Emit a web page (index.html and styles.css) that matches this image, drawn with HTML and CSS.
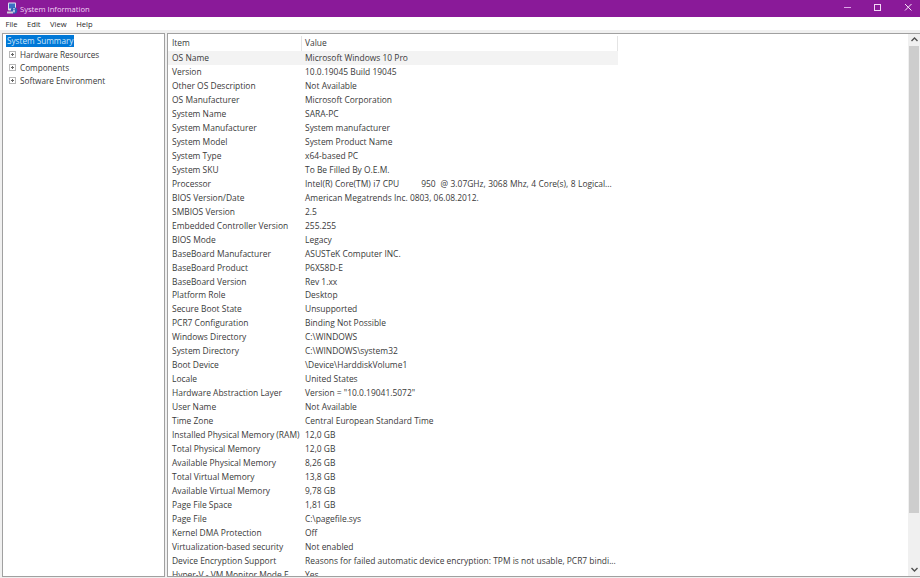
FILE: index.html
```html
<!DOCTYPE html>
<html lang="en">
<head>
<meta charset="utf-8">
<title>System Information</title>
<link rel="stylesheet" href="styles.css">
</head>
<body>
<div class="window">
  <header class="titlebar">
    <svg class="app-icon" width="13" height="13" viewBox="0 0 13 13"><rect x="3" y="0.5" width="8" height="8" rx="1" fill="#dfe6f2"/><rect x="4" y="1.5" width="6" height="5" fill="#3a6fc4"/><circle cx="9" cy="8.5" r="3.2" fill="#2f5fb5"/><rect x="8.4" y="7.6" width="1.2" height="2.8" fill="#fff"/><rect x="8.4" y="6.1" width="1.2" height="1" fill="#fff"/><rect x="2" y="9.5" width="6" height="2" fill="#c9ced8"/></svg>
    <span class="title">System Information</span>
    <div class="caption">
      <svg class="cap" width="30" height="17" viewBox="0 0 30 17"><path d="M14 7.5h7" stroke="#dca6e6" stroke-width="1"/></svg>
      <svg class="cap" width="30" height="17" viewBox="0 0 30 17"><rect x="14.5" y="4.5" width="6" height="6" fill="none" stroke="#f3d9f6" stroke-width="1"/></svg>
      <svg class="cap" width="30" height="17" viewBox="0 0 30 17"><path d="M15 4l6.5 6.5M21.5 4L15 10.5" stroke="#f7e6f9" stroke-width="1"/></svg>
    </div>
  </header>
  <nav class="menubar"><span>File</span><span>Edit</span><span>View</span><span>Help</span></nav>
  <main class="panes">
    <aside class="tree">
      <div class="tree-root"><span class="selected">System Summary</span></div>
      <div class="tree-item"><span class="expander"></span>Hardware Resources</div>
      <div class="tree-item"><span class="expander"></span>Components</div>
      <div class="tree-item"><span class="expander"></span>Software Environment</div>
    </aside>
    <section class="list">
      <div class="list-body">
        <div class="row head"><div class="c1">Item</div><div class="c2">Value</div></div>
        <div class="row hot"><div class="c1">OS Name</div><div class="c2">Microsoft Windows 10 Pro</div></div>
        <div class="row"><div class="c1">Version</div><div class="c2">10.0.19045 Build 19045</div></div>
        <div class="row"><div class="c1">Other OS Description</div><div class="c2">Not Available</div></div>
        <div class="row"><div class="c1">OS Manufacturer</div><div class="c2">Microsoft Corporation</div></div>
        <div class="row"><div class="c1">System Name</div><div class="c2">SARA-PC</div></div>
        <div class="row"><div class="c1">System Manufacturer</div><div class="c2">System manufacturer</div></div>
        <div class="row"><div class="c1">System Model</div><div class="c2">System Product Name</div></div>
        <div class="row"><div class="c1">System Type</div><div class="c2">x64-based PC</div></div>
        <div class="row"><div class="c1">System SKU</div><div class="c2">To Be Filled By O.E.M.</div></div>
        <div class="row"><div class="c1">Processor</div><div class="c2 wide-spaces">Intel(R) Core(TM) i7 CPU         950  @ 3.07GHz, 3068 Mhz, 4 Core(s), 8 Logical...</div></div>
        <div class="row"><div class="c1">BIOS Version/Date</div><div class="c2">American Megatrends Inc. 0803, 06.08.2012.</div></div>
        <div class="row"><div class="c1">SMBIOS Version</div><div class="c2">2.5</div></div>
        <div class="row"><div class="c1">Embedded Controller Version</div><div class="c2">255.255</div></div>
        <div class="row"><div class="c1">BIOS Mode</div><div class="c2">Legacy</div></div>
        <div class="row"><div class="c1">BaseBoard Manufacturer</div><div class="c2">ASUSTeK Computer INC.</div></div>
        <div class="row"><div class="c1">BaseBoard Product</div><div class="c2">P6X58D-E</div></div>
        <div class="row"><div class="c1">BaseBoard Version</div><div class="c2">Rev 1.xx</div></div>
        <div class="row"><div class="c1">Platform Role</div><div class="c2">Desktop</div></div>
        <div class="row"><div class="c1">Secure Boot State</div><div class="c2">Unsupported</div></div>
        <div class="row"><div class="c1">PCR7 Configuration</div><div class="c2">Binding Not Possible</div></div>
        <div class="row"><div class="c1">Windows Directory</div><div class="c2">C:\WINDOWS</div></div>
        <div class="row"><div class="c1">System Directory</div><div class="c2">C:\WINDOWS\system32</div></div>
        <div class="row"><div class="c1">Boot Device</div><div class="c2">\Device\HarddiskVolume1</div></div>
        <div class="row"><div class="c1">Locale</div><div class="c2">United States</div></div>
        <div class="row"><div class="c1">Hardware Abstraction Layer</div><div class="c2">Version = "10.0.19041.5072"</div></div>
        <div class="row"><div class="c1">User Name</div><div class="c2">Not Available</div></div>
        <div class="row"><div class="c1">Time Zone</div><div class="c2">Central European Standard Time</div></div>
        <div class="row"><div class="c1">Installed Physical Memory (RAM)</div><div class="c2">12,0 GB</div></div>
        <div class="row"><div class="c1">Total Physical Memory</div><div class="c2">12,0 GB</div></div>
        <div class="row"><div class="c1">Available Physical Memory</div><div class="c2">8,26 GB</div></div>
        <div class="row"><div class="c1">Total Virtual Memory</div><div class="c2">13,8 GB</div></div>
        <div class="row"><div class="c1">Available Virtual Memory</div><div class="c2">9,78 GB</div></div>
        <div class="row"><div class="c1">Page File Space</div><div class="c2">1,81 GB</div></div>
        <div class="row"><div class="c1">Page File</div><div class="c2">C:\pagefile.sys</div></div>
        <div class="row"><div class="c1">Kernel DMA Protection</div><div class="c2">Off</div></div>
        <div class="row"><div class="c1">Virtualization-based security</div><div class="c2">Not enabled</div></div>
        <div class="row"><div class="c1">Device Encryption Support</div><div class="c2">Reasons for failed automatic device encryption: TPM is not usable, PCR7 bindi...</div></div>
        <div class="row"><div class="c1">Hyper-V - VM Monitor Mode E</div><div class="c2">Yes</div></div>
      </div>
      <div class="scrollbar">
        <svg class="arrow" width="11" height="9" viewBox="0 0 11 9"><path d="M2.5 6L5.5 3l3 3" fill="none" stroke="#505050" stroke-width="1.4"/></svg>
        <div class="track"><div class="thumb"></div></div>
        <svg class="arrow" width="11" height="9" viewBox="0 0 11 9"><path d="M2.5 3l3 3 3-3" fill="none" stroke="#505050" stroke-width="1.4"/></svg>
      </div>
    </section>
  </main>
</div>
</body>
</html>
```
FILE: styles.css
```css
* { box-sizing: border-box; }
html, body { margin: 0; padding: 0; }
body { width: 920px; height: 578px; overflow: hidden; background: #fff; font-family: "Open Sans", "Noto Sans", sans-serif; font-size: 8.45px; color: #3a3a3a; }
.window { display: flex; flex-direction: column; height: 578px; }
.titlebar { flex: 0 0 17px; display: flex; align-items: center; background: #8a1a99; color: #f0d6f4; padding-left: 5px; }
.app-icon { flex: none; }
.title { margin-left: 2px; font-size: 7.6px; }
.caption { margin-left: auto; display: flex; }
.cap { display: block; }
.menubar { flex: 0 0 13px; display: flex; align-items: center; gap: 9.5px; padding-left: 5.5px; background: #fff; color: #2a2a2a; font-size: 7.6px; }
.panes { flex: 1; display: flex; gap: 2px; padding: 3px 0 1px 2px; background: #f0f0f0; min-height: 0; }
.tree { flex: 0 0 163px; background: #fff; border: 1px solid #a0a0a0; padding: 1px 0 0 3px; }
.tree-root { height: 13px; line-height: 12px; font-size: 8.2px; }
.selected { display: inline-block; background: #0078d7; color: #cfe6fa; padding: 0 1px; height: 12px; }
.tree-item { height: 13.2px; line-height: 13.2px; display: flex; align-items: center; padding-left: 3px; font-size: 8.2px; }
.expander { width: 7px; height: 7px; border: 1px solid #b8b8b8; margin-right: 4px; position: relative; }
.expander::before { content: ""; position: absolute; left: 1px; right: 1px; top: 2px; height: 1px; background: #666; }
.expander::after { content: ""; position: absolute; top: 1px; bottom: 1px; left: 2px; width: 1px; background: #666; }
.list { flex: 1; display: flex; background: #fff; border: 1px solid #a0a0a0; border-right: 0; min-width: 0; overflow: hidden; }
.list-body { flex: 1; padding-top: 2px; overflow: hidden; min-width: 0; }
.row { display: flex; width: 450px; height: 13.97px; line-height: 14px; white-space: pre; }
.row.hot { background: #f3f3f3; }
.row.head { height: 15px; border-right: 1px solid #e4e4e4; }
.head .c1 { border-right: 1px solid #e4e4e4; }
.c1 { flex: 0 0 134px; padding-left: 4px; overflow: hidden; }
.c2 { flex: 1; padding-left: 3px; overflow: hidden; }
.wide-spaces { word-spacing: 0.25px; }
.scrollbar { flex: 0 0 12px; display: flex; flex-direction: column; align-items: center; background: #f0f0f0; padding: 1px 0 2px; }
.arrow { flex: none; display: block; }
.track { flex: 1; width: 100%; padding: 2px 1px 0; }
.thumb { height: 467px; background: #cdcdcd; }
```
